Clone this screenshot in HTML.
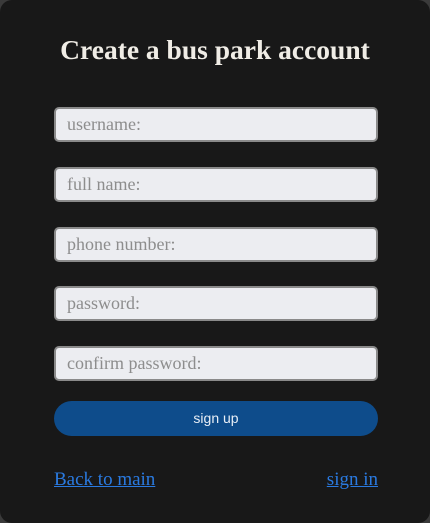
<!DOCTYPE html>
<html><head><style>
html,body{margin:0;padding:0;background:#3a3a3a;}
.card{position:absolute;left:0;top:0;width:430px;height:523px;background:#181818;border-radius:12px;overflow:hidden;}
h1{position:absolute;left:0;width:430px;top:34px;margin:0;text-align:center;font:bold 27.5px "Liberation Serif",serif;color:#f0ede6;}
.in{position:absolute;left:54px;height:31px;background:#ecedf1;border:2px solid #8a8a8a;border-radius:5px;font:18px "Liberation Serif",serif;color:#8d8d8d;line-height:31px;padding-left:11px;width:309px;}
.btn{position:absolute;left:54px;top:401px;width:324px;height:35px;background:#0e4c8b;border-radius:18px;color:#e8eef6;font:14px "Liberation Sans",sans-serif;text-align:center;line-height:34px;}
a{position:absolute;top:469px;font:19px "Liberation Serif",serif;color:#2a7ae0;text-decoration:underline;}
</style></head><body><div class="card">
<h1>Create a bus park account</h1>
<div class="in" style="top:107px">username:</div>
<div class="in" style="top:167px">full name:</div>
<div class="in" style="top:227px">phone number:</div>
<div class="in" style="top:286px">password:</div>
<div class="in" style="top:346px">confirm password:</div>
<div class="btn">sign up</div>
<a style="left:54px">Back to main</a>
<a style="right:52px">sign in</a>
</div></body></html>
